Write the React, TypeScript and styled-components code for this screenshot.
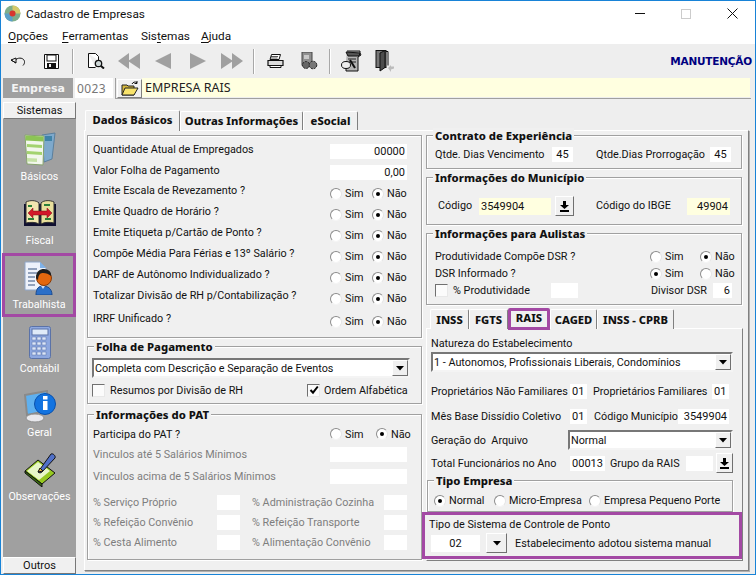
import React from "react";
import styled, { createGlobalStyle } from "styled-components";

const UI = `Roboto, "Liberation Sans", sans-serif`;
const HEAD = `"Noto Sans", "Liberation Sans", sans-serif`;

const Global = createGlobalStyle`
  html, body { margin: 0; padding: 0; background: #fff; }
  * { box-sizing: border-box; }
  body { font-family: ${UI}; font-size: 11px; color: #101010; }
`;

const Win = styled.div`
  width: 756px; height: 575px; display: flex; flex-direction: column; overflow: hidden;
  border: 1px solid #1883d7; background: #fff;
`;
const TitleBar = styled.div`
  height: 27px; flex: none; display: flex; align-items: center; background: #fff; padding: 0 0 2px 3px;
  font-size: 11.8px; color: #111;
`;
const TitleText = styled.span` margin-left: 5px; `;
const WinButtons = styled.div` margin-left: auto; display: flex; align-items: center; `;
const WinBtn = styled.span` width: 46px; height: 25px; display: flex; align-items: center; justify-content: center; `;
const MenuBar = styled.div`
  height: 16px; flex: none; display: flex; padding-left: 7px; align-items: center; background: #fff; font-size: 11.8px;
`;
const MenuItem = styled.span<{ $w: number }>` width: ${p => p.$w}px; u { text-underline-offset: 2px; }`;
const Toolbar = styled.div`
  height: 34px; flex: none; background: #eeeeee; display: flex; align-items: center; position: relative;
`;
const Tool = styled.span<{ $w: number; $ml?: number }>`
  width: ${p => p.$w}px; height: 22px; margin-left: ${p => p.$ml ?? 0}px; display: flex; align-items: center; justify-content: center; flex: none;
`;
const ToolSep = styled.span<{ $ml: number }>`
  width: 2px; height: 25px; background: #a8a8a8; border-right: 1px solid #fff; margin-left: ${p => p.$ml}px; flex: none;
`;
const Mode = styled.span`
  margin-left: auto; margin-right: 3px; font: bold 10.5px "DejaVu Sans", sans-serif; color: #000080; letter-spacing: -.2px;
`;
const CompanyBar = styled.div`
  height: 21px; flex: none; display: flex; background: #eeeeee; padding-left: 2px;
`;
const CompanyLabel = styled.div`
  width: 70px; height: 20px; background: #a0a0a0; color: #f4f4f4; font: bold 11px "DejaVu Sans", sans-serif;
  display: flex; align-items: center; justify-content: center;
`;
const CompanyCode = styled.div`
  width: 38px; height: 20px; margin-left: 2px; background: #fff; color: #777; font: 12px ${HEAD}; display: flex; align-items: center; padding-left: 2px; letter-spacing: .4px;
`;
const CompanyInput = styled.div`
  margin-left: 2px; width: 636px; height: 21px; display: flex; border-bottom: 1px solid #a0a0a0; border-left: 1px solid #a0a0a0; padding-left: 1px;
`;
const FolderBtn = styled.div`
  width: 25px; height: 19px; margin-top: 1px; background: #f0f0f0; border: 1px solid; border-color: #fff #808080 #808080 #fff;
  display: flex; align-items: center; justify-content: center;
`;
const CompanyName = styled.div`
  flex: 1; height: 19px; margin-right: 1px; background: #ffffe0; font: 12.5px ${HEAD}; display: flex; align-items: center; padding-left: 3px; color: #222;
`;
const Body = styled.div` flex: 1; display: flex; background: #eeeeee; `;
const Sidebar = styled.aside`
  width: 73px; margin: 3px 0 0 2px; height: 472px; background: #a0a0a0; display: flex; flex-direction: column; flex: none;
`;
const SideHead = styled.div`
  height: 17px; flex: none; background: #f0f0f0; border: 1px solid; border-color: #fff #777 #777 #fff;
  font-size: 11px; color: #111; display: flex; align-items: center; justify-content: center;
`;
const SideList = styled.div` flex: 1; padding-top: 6px; `;
const SideItem = styled.div<{ $hl?: boolean }>`
  height: 64px; display: flex; flex-direction: column; align-items: center; color: #fff; font-size: 10.7px; position: relative;
  padding-top: 8px;
  ${p => p.$hl ? `outline: 3px solid #a349a4; outline-offset: -3px; margin-left: -1px;` : ""}
`;
const SideIcon = styled.div` height: 34px; display: flex; align-items: center; justify-content: center; `;
const SideLabel = styled.div` margin-top: 3px; line-height: 14px; `;
const Main = styled.div` margin: 10px 0 0 8px; width: 665px; display: flex; flex-direction: column; `;
const TabStrip = styled.div<{ $h: number; $pl: number }>`
  height: ${p => p.$h}px; display: flex; align-items: flex-end; padding-left: ${p => p.$pl}px; flex: none; position: relative; z-index: 2;
`;
const SubTabStrip = styled(TabStrip)` margin-top: 2px; `;
const Tab = styled.div<{ $active?: boolean; $hl?: boolean; $w: number }>`
  width: ${p => p.$w}px; height: ${p => (p.$active ? "100%" : "calc(100% - 2px)")};
  font: 800 11.2px ${HEAD}; color: #111; padding-bottom: 1px;
  display: flex; align-items: center; justify-content: center; background: #f0f0f0; flex: none;
  border-top: 1px solid #fff; border-left: 1px solid #fff; border-right: 1px solid #808080;
  border-top-left-radius: 2px; border-top-right-radius: 2px;
  ${p => p.$active ? "margin-bottom:-1px; padding-bottom:4px;" : ""}
  ${p => p.$hl ? "outline: 3px solid #a349a4; outline-offset: -3px; border: 0;" : ""}
`;
const Page = styled.div`
  width: 665px; height: 441px; background: #f0f0f0; border: 1px solid; border-color: #fff #808080 #808080 #fff;
  box-shadow: 1px 1px 0 #b0b0b0; display: flex; padding: 4px 0 0 2px; gap: 4px;
`;
const Col = styled.div<{ $w: number }>` width: ${p => p.$w}px; display: flex; flex-direction: column; flex: none; `;
const Group = styled.div<{ $h: number; $mt?: number; $pt?: number; $pl?: number; $pr?: number }>`
  height: ${p => p.$h}px; margin-top: ${p => p.$mt ?? 0}px; position: relative; flex: none;
  border: 1px solid #a0a0a0; box-shadow: inset 1px 1px 0 #fff, 1px 1px 0 #fff;
  padding: ${p => p.$pt ?? 0}px ${p => p.$pr ?? 0}px 0 ${p => p.$pl ?? 0}px;
`;
const TipoGroup = styled(Group)` width: 306px; margin-left: -4px; `;
const Legend = styled.div`
  position: absolute; left: 6px; top: -8px; padding: 0 2px; background: #f0f0f0;
  font: 800 11.3px ${HEAD}; line-height: 15px; color: #111;
`;
const Row = styled.div<{ $h: number; $mt?: number; $pl?: number }>`
  height: ${p => p.$h}px; margin-top: ${p => p.$mt ?? 0}px; padding-left: ${p => p.$pl ?? 0}px; display: flex; align-items: center; flex: none;
`;
const Label = styled.span<{ $w?: number; $up?: number; $dim?: boolean; $ml?: number }>`
  ${p => p.$w ? `width:${p.$w}px;flex:none;` : ""}
  ${p => p.$ml ? `margin-left:${p.$ml}px;` : ""}
  ${p => p.$up ? `padding-bottom:${p.$up}px;` : ""}
  color: ${p => p.$dim ? "#7e7e7e" : "#111"}; white-space: nowrap; font-size: 10.8px;
`;
const Field = styled.div<{ $w: number; $h?: number; $ml?: number; $right?: boolean; $yellow?: boolean; $center?: boolean }>`
  width: ${p => p.$w}px; height: ${p => p.$h ?? 15}px; margin-left: ${p => p.$ml ?? 0}px; flex: none;
  background: ${p => p.$yellow ? "#ffffe0" : "#fff"}; font-size: 11px; color: #111;
  display: flex; align-items: center; padding: 0 2px;
  justify-content: ${p => p.$center ? "center" : p.$right ? "flex-end" : "flex-start"};
`;
const Options = styled.div<{ $ml?: number }>` display: flex; align-items: center; margin-left: ${p => p.$ml ?? 0}px; flex: none; `;
const Opt = styled.label<{ $w: number }>`
  display: flex; align-items: center; width: ${p => p.$w}px; flex: none; gap: 3px; font-size: 10.8px; color: #111; white-space: nowrap;
`;
const Radio = styled.span<{ $on?: boolean }>`
  width: 12px; height: 12px; border-radius: 50%; flex: none; background: #fff; display: flex; align-items: center; justify-content: center;
  border: 1px solid; border-color: #8c8c8c #e4e4e4 #f4f4f4 #8c8c8c;
  &::after { content: ""; width: 4px; height: 4px; border-radius: 50%; background: ${p => p.$on ? "#000" : "transparent"}; }
`;
const CheckBox = styled.span`
  width: 13px; height: 13px; flex: none; background: #fbfbfb; border: 1px solid; border-color: #707070 #e8e8e8 #e8e8e8 #707070;
  display: flex; align-items: center; justify-content: center;
`;
const Select = styled.div<{ $w: number; $ml?: number; $mt?: number }>`
  width: ${p => p.$w}px; height: 20px; margin-left: ${p => p.$ml ?? 0}px; margin-top: ${p => p.$mt ?? 0}px; flex: none; background: #fff;
  border: 2px solid; border-color: #777 #f4f4f4 #f4f4f4 #777; display: flex; align-items: center; font-size: 10.8px; color: #111; padding-left: 1px;
`;
const SelectText = styled.span` flex: 1; white-space: nowrap; `;
const SelectBtn = styled.span`
  width: 16px; height: 16px; background: #f0f0f0; border: 1px solid; border-color: #fff #707070 #707070 #fff;
  display: flex; align-items: center; justify-content: center; flex: none;
`;
const PickBtn = styled.span<{ $w: number; $h: number; $ml: number }>`
  width: ${p => p.$w}px; height: ${p => p.$h}px; margin-left: ${p => p.$ml}px; background: #f0f0f0; flex: none;
  border: 1px solid; border-color: #fff #707070 #707070 #fff; display: flex; align-items: center; justify-content: center;
`;
const SubPage = styled.div`
  width: 317px; height: 233px; margin-top: -1px; background: #f0f0f0; position: relative; z-index: 1;
  border: 1px solid; border-color: #fff #808080 #808080 #fff; padding: 8px 0 0 4px; display: flex; flex-direction: column;
`;
const MarkedArea = styled.div`
  width: 320px; height: 47px; margin-left: -9px; flex: none; border: 3px solid #a349a4; background: #f0f0f0; padding: 2px 0 0 4px; position: relative;
`;

const ArrowDown = () => <svg width="8" height="5" viewBox="0 0 8 5"><path d="M0 0h8L4 4.6z" fill="#000" /></svg>;
const PickIcon = () => (
  <svg width="9" height="11" viewBox="0 0 9 11"><path d="M3 0h3v4h3L4.5 8 0 4h3z" fill="#000" /><rect y="9" width="9" height="2" fill="#000" /></svg>
);
const Tick = () => <svg width="10" height="10" viewBox="0 0 10 10"><path d="M1.5 5l2.5 2.7L8.8 1.5" fill="none" stroke="#000" strokeWidth="2" /></svg>;

const AppLogo = () => (
  <svg width="17" height="17" viewBox="0 0 17 17">
    <circle cx="8.5" cy="8.5" r="8" fill="#7fae8a" />
    <path d="M8.5.5a8 8 0 0 1 8 8h-5a3 3 0 0 0-3-3z" fill="#d6c96a" />
    <path d="M.5 8.5a8 8 0 0 0 8 8v-5a3 3 0 0 1-3-3z" fill="#5aa0c8" />
    <circle cx="8.5" cy="8.5" r="3" fill="#d8362e" />
  </svg>
);
const Undo = () => (
  <svg width="16" height="12" viewBox="0 0 16 12" fill="none" stroke="#111" strokeWidth="1">
    <path d="M1 5l5-2v5zM6 4.500c3-2.500 8-1.500 8.500 2 .2 1.500-.5 3-1.500 4" /><path d="M1 5l5 3" />
  </svg>
);
const Save = () => (
  <svg width="15" height="15" viewBox="0 0 15 15">
    <path d="M.5.5h14v14H.5z" fill="#fff" stroke="#111" /><rect x="3" y="1" width="9" height="6" fill="#fff" stroke="#111" />
    <rect x="3" y="9" width="9" height="5.500" fill="#111" /><rect x="5" y="10" width="2" height="3" fill="#eee" />
  </svg>
);
const Preview = () => (
  <svg width="18" height="16" viewBox="0 0 18 16" fill="none" stroke="#111">
    <path d="M1.500.5h7l3 3v4M1.500.5v14h7" fill="#fff" /><circle cx="11.500" cy="10.500" r="3.200" fill="#cfd8d8" strokeWidth="1.300" />
    <path d="M14 13l3 2.500" strokeWidth="2" />
  </svg>
);
const Nav = ({ kind }: { kind: string }) => {
  const pts: Record<string, string> = { prev: "0,8 16,0 16,16", next: "0,0 16,8 0,16" };
  if (kind === "first") return <svg width="22" height="16" viewBox="0 0 22 16"><path d="M0 8l11-8v16zM10 8l12-8v16z" fill="#a0a0a0" /></svg>;
  if (kind === "last") return <svg width="22" height="16" viewBox="0 0 22 16"><path d="M0 0l12 8-12 8zM11 0l11 8-11 8z" fill="#a0a0a0" /></svg>;
  return <svg width="16" height="16" viewBox="0 0 16 16"><polygon points={pts[kind]} fill="#a0a0a0" /></svg>;
};
const Printer = () => (
  <svg width="17" height="14" viewBox="0 0 17 14" stroke="#111" fill="#fff">
    <path d="M4.500.5h9l-1.500 5H3z" /><path d="M1 6.500h15v5H1z" fill="#ddd" strokeWidth="1.200" /><path d="M3 11.500h11v2H3z" /><path d="M4 2.500h7M3.500 4h7" strokeWidth=".7" />
  </svg>
);
const Gears = () => (
  <svg width="17" height="18" viewBox="0 0 17 18">
    <rect x="1" y="0" width="10" height="13" fill="#8f8f8f" stroke="#444" />
    <rect x="3" y="3" width="5" height="4" fill="#c8c8c8" />
    <circle cx="5" cy="13" r="3.500" fill="#666" stroke="#222" strokeDasharray="2 1" />
    <circle cx="12" cy="13" r="3.800" fill="#777" stroke="#222" strokeDasharray="2 1" />
  </svg>
);
const Stamp = () => (
  <svg width="21" height="22" viewBox="0 0 21 22">
    <path d="M6 1h13v2l1 2-3 2v14H5V11" fill="#b4b4b4" stroke="#111" />
    <path d="M5 2l14 1-1 3H7z" fill="#555" stroke="#111" />
    <path d="M7 9h8M8 12h7" stroke="#222" />
    <ellipse cx="5" cy="15" rx="4.500" ry="3.500" fill="#eee" stroke="#111" />
    <path d="M9 10l5 8" stroke="#111" strokeWidth="2" />
  </svg>
);
const Door = () => (
  <svg width="20" height="22" viewBox="0 0 20 22">
    <rect x="1" y=".5" width="10" height="17" fill="#777" stroke="#111" />
    <path d="M5 3l5-2.500v17L5 21z" fill="#4d4d4d" stroke="#111" />
    <path d="M11 1.500h2v14" fill="none" stroke="#111" />
    <path d="M13 18l3-3v1.500h3v2l-3 1V22z" fill="#bcbcbc" />
  </svg>
);
const Folder = () => (
  <svg width="18" height="16" viewBox="0 0 18 16">
    <path d="M1 4h5l1 1h6v9H1z" fill="#d6b93e" stroke="#222" /><path d="M1 14l3-7h13l-4 7z" fill="#f8e36b" stroke="#222" />
    <path d="M11 3c1-2 3-2.500 5-1.500M16 0v2.500h-2.500" fill="none" stroke="#111" />
  </svg>
);

const Basicos = () => (
  <svg width="32" height="36" viewBox="0 0 32 36">
    <path d="M18 3l13-2-3 26-8 3z" fill="#7ea9cc" stroke="#5b7f9d" /><rect x="21" y="4" width="7" height="5" fill="#3f83a8" />
    <path d="M1 3l19 1-1 29-16-1z" fill="#f2f7ec" stroke="#87a36e" />
    <path d="M1.500 3.500l18 1v5l-18-1z" fill="#8cc454" /><path d="M3 12l15 1v3l-15-1zM3 19l15 1v3l-15-1z" fill="#a3d36e" />
    <path d="M3 26l10 .5v3.500l-10-.5z" fill="#c6e2a6" />
  </svg>
);
const Fiscal = () => (
  <svg width="32" height="28" viewBox="0 0 32 28">
    <path d="M0 4h32v22H0z" fill="#101030" /><path d="M2 2c4-2 10-2 13 1v21c-3-2-9-2-13-1z" fill="#f1e6b0" stroke="#333" />
    <path d="M30 2c-4-2-10-2-13 1v21c3-2 9-2 13-1z" fill="#e8df9c" stroke="#333" />
    <path d="M4 6l4 0M20 5h6M21 19h6M4 19h6" stroke="#2a7f3a" strokeWidth="2" />
    <path d="M4 13l5-5v3h14V8l5 5-5 5v-3H9v3z" fill="#d2182a" stroke="#7a0f15" strokeWidth=".5" />
  </svg>
);
const Trab = () => (
  <svg width="30" height="34" viewBox="0 0 30 34">
    <path d="M1 1h15l6 6v22H1z" fill="#eef2fb" stroke="#8fa6c8" /><path d="M16 1v6h6z" fill="#7fb2e8" />
    <path d="M4 8h9M4 12h9M4 16h7M4 20h7M4 24h7" stroke="#34507c" />
    <path d="M12 34c0-7 3-9 7-9s9 2 9 9z" fill="#2b6fc8" stroke="#1c4a8e" /><path d="M17 25l2 3 2-3z" fill="#cfe0f5" />
    <circle cx="20" cy="17" r="7.500" fill="#e2670f" stroke="#8a3a05" /><path d="M12 17c0-7 4-9 8-9s8 3 7 7c-3-3-9-4-11-2-1 1-2 3-2 6z" fill="#1e1e1e" />
  </svg>
);
const Contabil = () => (
  <svg width="22" height="33" viewBox="0 0 22 33">
    <rect x=".5" y=".5" width="21" height="32" rx="2" fill="#8ea8e0" stroke="#5a72a8" />
    <rect x="3" y="3" width="16" height="6" fill="#dfeaf8" stroke="#5a72a8" />
    {[11, 16, 21, 26].map(y => [3, 8, 13].map(x => <rect key={`${x}-${y}`} x={x} y={y} width="4" height="3" fill="#dce6f8" stroke="#5a72a8" strokeWidth=".5" />))}
  </svg>
);
const Geral = () => (
  <svg width="32" height="33" viewBox="0 0 32 33">
    <path d="M1 5l22-4v20L3 25z" fill="#5fb0ef" stroke="#8a8a8a" strokeWidth="2" />
    <ellipse cx="11" cy="28" rx="9" ry="4" fill="#e8e8ec" stroke="#909090" />
    <circle cx="21" cy="14" r="10.500" fill="#1273e0" stroke="#0a50ac" />
    <rect x="19" y="11" width="4.500" height="9" fill="#fff" /><rect x="19" y="6" width="4.500" height="3.500" fill="#fff" />
  </svg>
);
const Obs = () => (
  <svg width="32" height="34" viewBox="0 0 32 34">
    <path d="M1 18l13-11 17 13-13 11z" fill="#96c820" stroke="#111" /><path d="M1 18l17 13v3L1 20z" fill="#3b6c10" stroke="#111" />
    <path d="M3 18l11-9 12 9-11 9z" fill="#e8f6c8" />
    <path d="M14 19l2 1 2-1 13-14c1-2-2-5-4-4z" fill="#5070c8" stroke="#111" /><path d="M14 19l2-4 3 3z" fill="#e3b13a" stroke="#111" />
  </svg>
);

const YesNo = ({ w1, w2, on, ml }: { w1: number; w2: number; on: "s" | "n"; ml?: number }) => (
  <Options $ml={ml}>
    <Opt $w={w1}><Radio $on={on === "s"} />Sim</Opt>
    <Opt $w={w2}><Radio $on={on === "n"} />Não</Opt>
  </Options>
);

const questions = [
  "Emite Escala de Revezamento ?", "Emite Quadro de Horário ?", "Emite Etiqueta p/Cartão de Ponto ?",
  "Compõe Média Para Férias e 13º Salário ?", "DARF de Autônomo Individualizado ?",
  "Totalizar Divisão de RH p/Contabilização ?",
];
const sideItems = [
  { t: "Básicos", i: <Basicos /> }, { t: "Fiscal", i: <Fiscal /> }, { t: "Trabalhista", i: <Trab />, hl: true },
  { t: "Contábil", i: <Contabil /> }, { t: "Geral", i: <Geral /> }, { t: "Observações", i: <Obs /> },
];

export default function App() {
  return (
    <Win>
      <Global />
      <TitleBar>
        <AppLogo /><TitleText>Cadastro de Empresas</TitleText>
        <WinButtons>
          <WinBtn><svg width="10" height="1"><rect width="10" height="1" fill="#111" /></svg></WinBtn>
          <WinBtn><svg width="10" height="10"><rect x=".5" y=".5" width="9" height="9" fill="none" stroke="#ccc" /></svg></WinBtn>
          <WinBtn><svg width="11" height="11"><path d="M.5.5l10 10M10.500.5l-10 10" stroke="#111" /></svg></WinBtn>
        </WinButtons>
      </TitleBar>
      <MenuBar>
        <MenuItem $w={54}><u>O</u>pções</MenuItem>
        <MenuItem $w={79}><u>F</u>erramentas</MenuItem>
        <MenuItem $w={60}>Sis<u>t</u>emas</MenuItem>
        <MenuItem $w={40}><u>A</u>juda</MenuItem>
      </MenuBar>
      <Toolbar>
        <Tool $w={16} $ml={9}><Undo /></Tool>
        <Tool $w={15} $ml={18}><Save /></Tool>
        <ToolSep $ml={13} />
        <Tool $w={18} $ml={13}><Preview /></Tool>
        <Tool $w={22} $ml={13}><Nav kind="first" /></Tool>
        <Tool $w={16} $ml={15}><Nav kind="prev" /></Tool>
        <Tool $w={16} $ml={19}><Nav kind="next" /></Tool>
        <Tool $w={22} $ml={15}><Nav kind="last" /></Tool>
        <ToolSep $ml={10} />
        <Tool $w={17} $ml={12}><Printer /></Tool>
        <Tool $w={17} $ml={17}><Gears /></Tool>
        <ToolSep $ml={11} />
        <Tool $w={21} $ml={10}><Stamp /></Tool>
        <Tool $w={20} $ml={13}><Door /></Tool>
        <Mode>MANUTENÇÃO</Mode>
      </Toolbar>
      <CompanyBar>
        <CompanyLabel>Empresa</CompanyLabel>
        <CompanyCode>0023</CompanyCode>
        <CompanyInput>
          <FolderBtn><Folder /></FolderBtn>
          <CompanyName>EMPRESA RAIS</CompanyName>
        </CompanyInput>
      </CompanyBar>
      <Body>
        <Sidebar>
          <SideHead>Sistemas</SideHead>
          <SideList>
            {sideItems.map(s => (
              <SideItem key={s.t} $hl={s.hl}>
                <SideIcon>{s.i}</SideIcon>
                <SideLabel>{s.t}</SideLabel>
              </SideItem>
            ))}
          </SideList>
          <SideHead>Outros</SideHead>
        </Sidebar>
        <Main>
          <TabStrip $h={21} $pl={1}>
            <Tab $active $w={95}>Dados Básicos</Tab>
            <Tab $w={123}>Outras Informações</Tab>
            <Tab $w={55}>eSocial</Tab>
          </TabStrip>
          <Page>
            <Col $w={335}>
              <Group $h={203} $pt={5} $pl={5}>
                <Row $h={21}><Label $w={237} $up={5}>Quantidade Atual de Empregados</Label><Field $w={77} $right>00000</Field></Row>
                <Row $h={21}><Label $w={237} $up={5}>Valor Folha de Pagamento</Label><Field $w={77} $right>0,00</Field></Row>
                {questions.map(q => (
                  <Row $h={21} key={q}><Label $w={237} $up={6}>{q}</Label><YesNo w1={42} w2={36} on="n" /></Row>
                ))}
                <Row $h={21} $mt={2}><Label $w={237} $up={6}>IRRF Unificado ?</Label><YesNo w1={42} w2={36} on="n" /></Row>
              </Group>
              <Group $h={58} $mt={8} $pt={11} $pl={4}>
                <Legend>Folha de Pagamento</Legend>
                <Select $w={318}><SelectText>Completa com Descrição e Separação de Eventos</SelectText><SelectBtn><ArrowDown /></SelectBtn></Select>
                <Row $h={16} $mt={4}>
                  <CheckBox /><Label $ml={5} $w={197}>Resumos por Divisão de RH</Label>
                  <CheckBox><Tick /></CheckBox><Label $ml={4}>Ordem Alfabética</Label>
                </Row>
              </Group>
              <Group $h={146} $mt={10} $pt={12} $pl={5}>
                <Legend>Informações do PAT</Legend>
                <Row $h={14}><Label $w={237}>Participa do PAT ?</Label><YesNo w1={46} w2={36} on="n" /></Row>
                <Row $h={15} $mt={6}><Label $w={237} $dim>Vinculos até 5 Salários Mínimos</Label><Field $w={77} /></Row>
                <Row $h={15} $mt={7}><Label $w={237} $dim>Vinculos acima de 5 Salários Mínimos</Label><Field $w={77} /></Row>
                <Row $h={15} $mt={11}><Label $w={124} $dim>% Serviço Próprio</Label><Field $w={23} /><Label $w={132} $ml={12} $dim>% Administração Cozinha</Label><Field $w={23} /></Row>
                <Row $h={15} $mt={5}><Label $w={124} $dim>% Refeição Convênio</Label><Field $w={23} /><Label $w={132} $ml={12} $dim>% Refeição Transporte</Label><Field $w={23} /></Row>
                <Row $h={15} $mt={5}><Label $w={124} $dim>% Cesta Alimento</Label><Field $w={23} /><Label $w={132} $ml={12} $dim>% Alimentação Convênio</Label><Field $w={23} /></Row>
              </Group>
            </Col>
            <Col $w={316}>
              <Group $h={34} $pt={11} $pl={8}>
                <Legend>Contrato de Experiência</Legend>
                <Row $h={15}>
                  <Label $w={117}>Qtde. Dias Vencimento</Label><Field $w={21} $center>45</Field>
                  <Label $w={114} $ml={23}>Qtde.Dias Prorrogação</Label><Field $w={21} $center>45</Field>
                </Row>
              </Group>
              <Group $h={48} $mt={8} $pt={18} $pl={11}>
                <Legend>Informações do Município</Legend>
                <Row $h={20}>
                  <Label $w={41} $up={2}>Código</Label><Field $w={72} $h={17} $yellow>3549904</Field>
                  <PickBtn $w={19} $h={20} $ml={4}><PickIcon /></PickBtn>
                  <Label $w={91} $ml={22} $up={2}>Código do IBGE</Label><Field $w={43} $h={17} $yellow $right>49904</Field>
                </Row>
              </Group>
              <Group $h={72} $mt={8} $pt={14} $pl={8}>
                <Legend>Informações para Aulistas</Legend>
                <Row $h={17}><Label $w={215}>Produtividade Compõe DSR ?</Label><YesNo w1={50} w2={36} on="n" /></Row>
                <Row $h={17}><Label $w={215}>DSR Informado ?</Label><YesNo w1={50} w2={36} on="s" /></Row>
                <Row $h={17}>
                  <CheckBox /><Label $w={98} $ml={5}>% Produtividade</Label><Field $w={27} />
                  <Label $w={62} $ml={73}>Divisor DSR</Label><Field $w={19} $right>6</Field>
                </Row>
              </Group>
              <SubTabStrip $h={22} $pl={4}>
                <Tab $w={39}>INSS</Tab>
                <Tab $w={39}>FGTS</Tab>
                <Tab $active $hl $w={42}>RAIS</Tab>
                <Tab $w={47}>CAGED</Tab>
                <Tab $w={77}>INSS - CPRB</Tab>
              </SubTabStrip>
              <SubPage>
                <Label>Natureza do Estabelecimento</Label>
                <Select $w={302} $mt={2}><SelectText>1 - Autonomos, Profissionais Liberais, Condomínios</SelectText><SelectBtn><ArrowDown /></SelectBtn></Select>
                <Row $h={15} $mt={12}>
                  <Label $w={139}>Proprietários Não Familiares</Label><Field $w={17}>01</Field>
                  <Label $w={119} $ml={6}>Proprietários Familiares</Label><Field $w={17} >01</Field>
                </Row>
                <Row $h={15} $mt={10}>
                  <Label $w={139}>Mês Base Dissídio Coletivo</Label><Field $w={17}>01</Field>
                  <Label $w={84} $ml={7}>Código Município</Label><Field $w={51} $right>3549904</Field>
                </Row>
                <Row $h={20} $mt={6}>
                  <Label $w={137}>Geração do &nbsp;Arquivo</Label>
                  <Select $w={165}><SelectText>Normal</SelectText><SelectBtn><ArrowDown /></SelectBtn></Select>
                </Row>
                <Row $h={20} $mt={3}>
                  <Label $w={139}>Total Funcionários no Ano</Label><Field $w={35} $right>00013</Field>
                  <Label $w={76} $ml={5}>Grupo da RAIS</Label><Field $w={27} />
                  <PickBtn $w={17} $h={20} $ml={3}><PickIcon /></PickBtn>
                </Row>
                <TipoGroup $h={32} $mt={7} $pt={13} $pl={6}>
                  <Legend>Tipo Empresa</Legend>
                  <Options>
                    <Opt $w={60}><Radio $on />Normal</Opt>
                    <Opt $w={95}><Radio />Micro-Empresa</Opt>
                    <Opt $w={130}><Radio />Empresa Pequeno Porte</Opt>
                  </Options>
                </TipoGroup>
                <MarkedArea>
                  <Row $h={14}><Label>Tipo de Sistema de Controle de Ponto</Label></Row>
                  <Row $h={20} $mt={2} $pl={2}>
                    <Field $w={49} $h={17} $center>02</Field>
                    <PickBtn $w={21} $h={20} $ml={6}><ArrowDown /></PickBtn>
                    <Label $ml={8}>Estabelecimento adotou sistema manual</Label>
                  </Row>
                </MarkedArea>
              </SubPage>
            </Col>
          </Page>
        </Main>
      </Body>
    </Win>
  );
}
